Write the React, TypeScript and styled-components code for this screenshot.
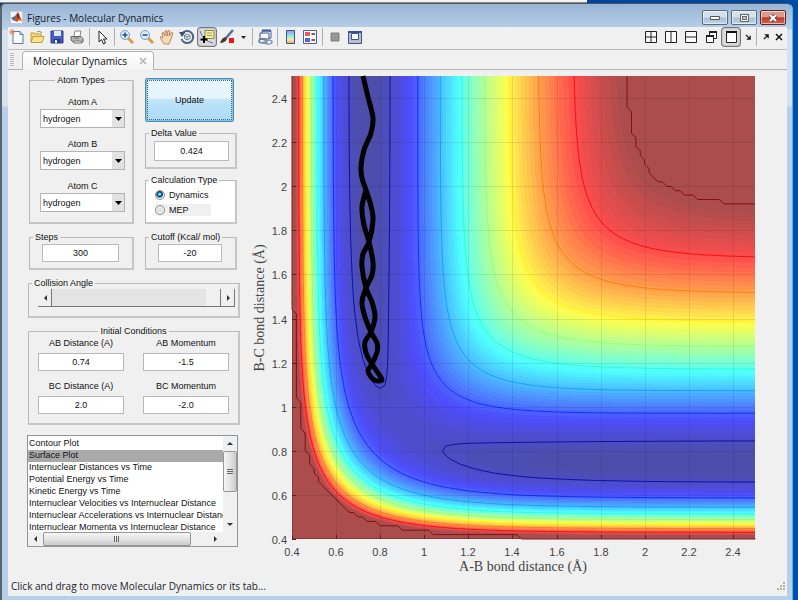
import React, { useState } from "react";
import styled, { createGlobalStyle, css } from "styled-components";

const GlobalStyle = createGlobalStyle`
  *, *::before, *::after { box-sizing: border-box; }
  html, body { margin: 0; padding: 0; }
  body { font-family: "Liberation Sans", Arial, sans-serif; font-size: 9px; line-height: 12px; color: #111; }
  button, input, select { font: inherit; color: inherit; }
`;

/* ---------- window frame ---------- */

const Desktop = styled.div`
  min-height: 100vh;
  display: flex;
  flex-direction: column;
  padding-right: 5px;
  background: linear-gradient(90deg, #003a80, #0049a4);
`;

const BackWindowEdge = styled.div`
  width: 74%;
  height: 3px;
  background: #f4f4f4;
  border-bottom: 1px solid #8d8d88;
`;

const Window = styled.div`
  flex: 1;
  display: flex;
  flex-direction: column;
  padding: 0 5px 4px 6px;
  border: 1px solid #4b5560;
  border-left: 2px solid #5a6570;
  border-right: 1px solid #35c5e8;
  border-bottom: 0;
  border-radius: 5px 6px 0 0;
  background: linear-gradient(180deg, #9ab5d4 0, #b6cfe9 25px, #d5e2f0 26px, #d5e2f0 102px, #b7d0e9 103px);
`;

const TitleBar = styled.header`
  display: flex;
  align-items: center;
  height: 23px;
  padding: 4px 1px 0 2px;
  gap: 4px;
`;

const Title = styled.h1`
  flex: 1;
  margin: 0;
  font: 400 10px/14px "Open Sans", "Noto Sans", sans-serif;
  color: #14202c;
`;

const WindowButtons = styled.div`
  display: flex;
  gap: 3px;
`;

const WindowButton = styled.button<{ $close?: boolean }>`
  width: 26px;
  height: 15px;
  padding: 0;
  display: grid;
  place-items: center;
  border: 1px solid #566a80;
  border-radius: 2px;
  box-shadow: inset 0 0 0 1px rgba(255, 255, 255, 0.55);
  background: linear-gradient(#d3e0ee 0 48%, #a9bfd7 52%, #c1d4e8);
  ${(p) => p.$close && css`
    border-color: #5c2626;
    background: linear-gradient(#dc9a8b 0 45%, #bd3a26 52%, #d2654e);
  `}
`;

const Client = styled.main`
  flex: 1;
  display: flex;
  flex-direction: column;
  background: #f0f0f0;
`;

/* ---------- tool bar ---------- */

const ToolBar = styled.div`
  display: flex;
  align-items: center;
  gap: 2px;
  height: 23px;
  padding: 0 3px 2px 0;
  border-bottom: 1px solid #bdbdbd;
`;

const ToolButton = styled.button<{ $pressed?: boolean; $narrow?: boolean }>`
  width: ${(p) => (p.$narrow ? 11 : 18)}px;
  height: 18px;
  padding: 0;
  display: grid;
  place-items: center;
  border: 0;
  border-radius: 3px;
  background: none;
  ${(p) => p.$pressed && css`
    background: #dcdcdc;
    box-shadow: 0 0 0 1px #777, inset 0 0 2px #999;
  `}
`;

const ToolSeparator = styled.span`
  width: 1px;
  height: 18px;
  margin: 0 1px;
  background: #b0b0b0;
`;

const Spacer = styled.span`
  flex: 1;
`;

/* ---------- tabs ---------- */

const TabStrip = styled.div`
  display: flex;
  align-items: flex-end;
  height: 20px;
  padding-left: 2px;
  border-bottom: 1px solid #b5b5b5;
`;

const Grip = styled.span`
  width: 4px;
  height: 13px;
  margin: 0 8px 3px 0;
  background: repeating-linear-gradient(#b8b8b8 0 1px, #f2f2f2 1px 2px);
`;

const Tab = styled.div`
  display: flex;
  align-items: center;
  gap: 12px;
  height: 19px;
  margin-bottom: -1px;
  padding: 0 6px 0 10px;
  border: 1px solid #b5b5b5;
  border-bottom: 0;
  border-radius: 4px 4px 0 0;
  background: linear-gradient(#fff, #f3f3f3);
`;

const TabLabel = styled.button`
  padding: 0;
  border: 0;
  background: none;
  font-family: "Open Sans", "Noto Sans", sans-serif;
  font-size: 10px;
  line-height: 14px;
`;

const TabClose = styled.button`
  padding: 0;
  border: 0;
  background: none;
  display: grid;
`;

/* ---------- controls ---------- */

const Workspace = styled.div`
  flex: 1;
  display: flex;
  align-items: flex-start;
`;

const Controls = styled.form`
  flex: 0 0 240px;
  display: flex;
  flex-direction: column;
  padding: 4px 8px 0 20px;
`;

const PairGrid = styled.div`
  display: grid;
  grid-template-columns: 105px 1fr;
  column-gap: 11px;
  margin: 0 3px 7px 1px;
`;

const Stack = styled.div`
  display: flex;
  flex-direction: column;
  gap: 5px;
  padding-top: 4px;
`;

const Panel = styled.fieldset<{ $white?: boolean; $gap?: number }>`
  min-width: 0;
  margin: 0 0 ${(p) => p.$gap ?? 0}px;
  padding: 0 6px 6px;
  border: 1px solid #b9b9b9;
  border-right-width: 2px;
  border-bottom-width: 2px;
  border-right-color: #c6c6c6;
  border-bottom-color: #c6c6c6;
  background: ${(p) => (p.$white ? "#fff" : "none")};
`;

const Legend = styled.legend<{ $center?: boolean }>`
  height: 12px;
  padding: 0 2px;
  margin: ${(p) => (p.$center ? "0 auto" : "0 0 0 -3px")};
  white-space: nowrap;
`;

const Field = styled.div`
  display: flex;
  flex-direction: column;
  align-items: center;
  gap: 1px;
  padding: 10px 0 0 3px;
`;

const FieldLabel = styled.label`
  white-space: nowrap;
`;

const SelectBox = styled.div`
  display: grid;
  width: 85px;
  height: 19px;
  & > * { grid-area: 1 / 1; }
`;

const Select = styled.select`
  appearance: none;
  width: 100%;
  padding: 0 16px 0 2px;
  border: 1px solid #b4b4b4;
  border-radius: 0;
  background: linear-gradient(90deg, #fff 0 71px, #e2e2e2 71px);
  outline: 0;
`;

const SelectArrow = styled.svg`
  justify-self: end;
  align-self: center;
  margin-right: 3px;
  pointer-events: none;
`;

const UpdateButton = styled.button`
  height: 44px;
  margin-right: 3px;
  border: 1px solid #4f8db5;
  border-radius: 2px;
  outline: 1px dotted #4a5f70;
  outline-offset: -3px;
  background: linear-gradient(#e6f4fc 0 45%, #bfe4f8 50%, #a9daf5);
  box-shadow: inset 0 0 0 1px #80c4ea;
`;

const NumberBox = styled.input<{ $height?: number }>`
  display: block;
  width: 100%;
  height: ${(p) => p.$height ?? 18}px;
  padding: 0;
  border: 1px solid #b7b9bf;
  border-radius: 0;
  background: #fff;
  text-align: center;
  outline: 0;
`;

const BoxInset = styled.div<{ $top?: number; $wide?: boolean }>`
  padding: ${(p) => p.$top ?? 0}px ${(p) => (p.$wide ? 7 : 0)}px 0 ${(p) => (p.$wide ? 6 : 2)}px;
`;

const RadioRow = styled.label<{ $shaded?: boolean }>`
  display: flex;
  align-items: center;
  gap: 4px;
  width: 56px;
  height: 12px;
  margin: 3px 0 0 3px;
  background: ${(p) => (p.$shaded ? "#f0f0f0" : "none")};
`;

const Radio = styled.input`
  appearance: none;
  width: 10px;
  height: 10px;
  margin: 0;
  border: 1px solid #8b8f94;
  border-radius: 50%;
  background: radial-gradient(circle, #ddd, #f4f4f4);
  &:checked {
    background: radial-gradient(circle at 45% 40%, #7fd6f6 0 1px, #17557d 2px 3px, #f0f4f6 4px);
  }
`;

const SliderRow = styled.div`
  display: grid;
  grid-template-columns: 14px 1fr 14px;
  height: 18px;
  margin: 0 -3px 3px 3px;
  border-bottom: 1px solid #777;
`;

const StepButton = styled.button`
  padding: 0 0 0 2px;
  border: 0;
  border-right: 1px solid #777;
  background: #f0f0f0;
  display: grid;
  place-items: center;
`;

const Slider = styled.input`
  appearance: none;
  width: 100%;
  min-width: 0;
  height: 17px;
  margin: 0;
  background: #e4e4e4;
  &::-webkit-slider-thumb {
    appearance: none;
    width: 15px;
    height: 17px;
    background: #f0f0f0;
    border-right: 1px solid #777;
  }
`;

const ConditionGrid = styled.div`
  display: grid;
  grid-template-columns: 1fr 1fr;
  column-gap: 19px;
  row-gap: 9px;
  padding: 0 3px 3px;
`;

const Condition = styled.div`
  display: flex;
  flex-direction: column;
  align-items: center;
  gap: 4px;
`;

/* ---------- list of plots ---------- */

const ListFrame = styled.div`
  display: grid;
  grid-template-columns: 1fr 14px;
  grid-template-rows: 96px 14px;
  width: 211px;
  margin-left: -1px;
  border: 1px solid #8f959c;
  background: #f0f0f0;
`;

const PlotList = styled.select`
  appearance: none;
  width: 100%;
  height: 96px;
  min-width: 0;
  padding: 2px 0 0;
  border: 0;
  border-radius: 0;
  outline: 0;
  overflow: hidden;
  background: #fff;
  option {
    min-height: 12px;
    height: 12px;
    padding: 0 1px;
    line-height: 12px;
    color: #111;
  }
  option:checked {
    background: #a9a9a9 linear-gradient(#a9a9a9, #a9a9a9);
    color: #111;
  }
`;

const ScrollTrack = styled.div<{ $vertical?: boolean }>`
  display: flex;
  flex-direction: ${(p) => (p.$vertical ? "column" : "row")};
  align-items: stretch;
  background: #f0f0f0;
`;

const ScrollArrow = styled.button`
  flex: 0 0 15px;
  padding: 0;
  border: 0;
  background: none;
  display: grid;
  place-items: center;
`;

const ScrollThumb = styled.div<{ $vertical?: boolean }>`
  flex: 0 0 ${(p) => (p.$vertical ? "41px" : "148px")};
  display: grid;
  place-items: center;
  border: 1px solid #979797;
  border-radius: 2px;
  background: linear-gradient(${(p) => (p.$vertical ? "90deg" : "180deg")}, #f5f5f5, #e4e4e4 50%, #cacaca);
`;

const StatusBar = styled.footer`
  display: flex;
  align-items: center;
  justify-content: space-between;
  height: 19px;
  padding: 0 1px 0 3px;
  font-family: "Open Sans", "Noto Sans", sans-serif;
  font-size: 10px;
  line-height: 15px;
  color: #1b1b2b;
`;

const ChartArea = styled.div`
  flex: 1;
  min-width: 0;
`;

const ChartSvg = styled.svg`
  display: block;
  width: 100%;
  height: auto;
`;

const TickText = styled.text`
  font-family: "Liberation Sans", Arial, sans-serif;
  font-size: 11px;
  fill: #444;
`;

const AxisText = styled.text`
  font-family: "Liberation Serif", "Times New Roman", serif;
  font-size: 14px;
  fill: #444;
`;

/* ---------- potential energy surface (collinear LEPS, H + H2) ---------- */

const WELL = 109.5;
const BETA = 1.942;
const R_EQ = 0.743;
const SATO = 0.187;
const CUTOFF = -22.2;
const LEFT = 292;
const TOP = 76;
const SIZE = 463;
const R_MIN = 0.4;
const R_SPAN = 2.1;

function pair(r: number): [number, number] {
  const u = Math.exp(-BETA * (r - R_EQ));
  const bound = WELL * (u * u - 2 * u);
  const anti = (WELL / 2) * (u * u + 2 * u);
  return [
    ((1 + SATO) * bound + (1 - SATO) * anti) / 2,
    ((1 + SATO) * bound - (1 - SATO) * anti) / 2,
  ];
}

function sampleSurface(n: number, offset: number): number[][] {
  const step = R_SPAN / (offset ? n : n - 1);
  const axis = Array.from({ length: n }, (_, i) => pair(R_MIN + (i + offset) * step));
  const outer = Array.from({ length: 2 * n }, (_, i) => pair(2 * R_MIN + (i + 2 * offset) * step));
  return axis.map(([qy, jy], row) =>
    axis.map(([qx, jx], col) => {
      const [qz, jz] = outer[row + col];
      const j = Math.sqrt(((jx - jy) ** 2 + (jy - jz) ** 2 + (jz - jx) ** 2) / 2);
      return Math.min(CUTOFF, (qx + qy + qz - j) / (1 + SATO));
    })
  );
}

function jet(t: number, alpha: number): string {
  const c = [3, 2, 1].map((k) => {
    const v = Math.max(0, Math.min(1, 1.5 - Math.abs(4 * t - k)));
    return Math.round(255 * (v * alpha + 1 - alpha));
  });
  return `rgb(${c.join(",")})`;
}

const toUnit = (v: number) => (v + WELL) / (CUTOFF + WELL);

function buildBands(): { d: string; fill: string }[] {
  const v = sampleSurface(SIZE, 0.5);
  const bins: string[][] = Array.from({ length: 64 }, () => []);
  v.forEach((line, row) => {
    const y = TOP + SIZE - 1 - row;
    let start = 0;
    const bin = (x: number) => Math.max(0, Math.min(63, Math.floor(toUnit(line[x]) * 64)));
    let current = bin(0);
    for (let x = 1; x <= SIZE; x++) {
      const next = x < SIZE ? bin(x) : -1;
      if (next !== current) {
        bins[current].push(`M${LEFT + start} ${y}h${x - start}v1h${start - x}z`);
        start = x;
        current = next;
      }
    }
  });
  return bins.map((b, i) => ({ d: b.join(""), fill: jet((i + 0.5) / 64, 0.7) }));
}

function buildContour(v: number[][], level: number): string {
  const n = v.length;
  const cell = SIZE / (n - 1);
  const out: string[] = [];
  const px = (x: number, y: number) =>
    `${(LEFT + x * cell).toFixed(1)} ${(TOP + SIZE - y * cell).toFixed(1)}`;
  for (let r = 0; r < n - 1; r++) {
    for (let c = 0; c < n - 1; c++) {
      const corners = [
        [c, r, v[r][c]],
        [c + 1, r, v[r][c + 1]],
        [c + 1, r + 1, v[r + 1][c + 1]],
        [c, r + 1, v[r + 1][c]],
      ];
      const hits: string[] = [];
      for (let k = 0; k < 4; k++) {
        const a = corners[k];
        const b = corners[(k + 1) % 4];
        if (a[2] < level !== b[2] < level) {
          const t = (level - a[2]) / (b[2] - a[2]);
          hits.push(px(a[0] + (b[0] - a[0]) * t, a[1] + (b[1] - a[1]) * t));
        }
      }
      for (let k = 0; k + 1 < hits.length; k += 2) out.push(`M${hits[k]}L${hits[k + 1]}`);
    }
  }
  return out.join("");
}

const BANDS = buildBands();
const GRID = sampleSurface(106, 0);
const CONTOURS = [-105.9, -95.5, -85, -74.6, -64.2, -53.8, -43.3, -32.9, CUTOFF - 0.001].map((level) => ({
  d: buildContour(GRID, level),
  stroke: jet(toUnit(level), 0.95),
}));

const X_TICKS = [0.4, 0.6, 0.8, 1, 1.2, 1.4, 1.6, 1.8, 2, 2.2, 2.4];
const toX = (r: number) => Math.round(LEFT + ((r - R_MIN) / R_SPAN) * SIZE);
const toY = (r: number) => Math.round(TOP + SIZE - ((r - R_MIN) / R_SPAN) * SIZE);

/* the trajectory comes in from the top, turns at the bottom loop and goes back */
const TRAJECTORY: [number, number][] = [
  [363, 76], [368, 97], [373, 118], [371, 133], [364, 150], [361, 167], [362, 178], [366, 190],
  [371, 206], [373, 220], [369, 242], [363, 254], [362, 267], [366, 288], [372, 302], [375, 317],
  [371, 332], [365, 342], [366, 353], [372, 364], [378, 373], [382, 380], [374, 380], [368, 371],
  [372, 364], [377, 352], [377, 343], [371, 332], [365, 317], [362, 302], [366, 288],
  [372, 275], [373, 262], [369, 242], [364, 225], [362, 207], [366, 190],
];

function smoothPath(p: [number, number][]): string {
  let d = `M${p[0][0]} ${p[0][1]}`;
  for (let i = 0; i < p.length - 1; i++) {
    const a = p[Math.max(0, i - 1)];
    const b = p[i];
    const c = p[i + 1];
    const e = p[Math.min(p.length - 1, i + 2)];
    d += `C${b[0] + (c[0] - a[0]) / 6} ${b[1] + (c[1] - a[1]) / 6} ${c[0] - (e[0] - b[0]) / 6} ${c[1] - (e[1] - b[1]) / 6} ${c[0]} ${c[1]}`;
  }
  return d;
}

function EnergyChart() {
  return (
    <ChartSvg viewBox="248 70 539 507" role="img" aria-label="Potential energy surface with trajectory">
      <g shapeRendering="crispEdges">
        {BANDS.map((b, i) => <path key={i} d={b.d} fill={b.fill} />)}
      </g>
      {CONTOURS.map((c, i) => <path key={i} d={c.d} stroke={c.stroke} fill="none" />)}
      <g stroke="#000" strokeOpacity="0.09">
        {X_TICKS.slice(1).map((t) => (
          <path key={t} d={`M${toX(t) + 0.5} ${TOP}v${SIZE}M${LEFT} ${toY(t) + 0.5}h${SIZE}`} />
        ))}
      </g>
      <path d={`M${LEFT + 0.5} ${TOP}v${SIZE - 0.5}h${SIZE}`} fill="none" stroke="#8b3a3a" />
      <g stroke="#5c2020">
        {X_TICKS.map((t) => (
          <path key={t} d={`M${toX(t) + 0.5} ${TOP + SIZE}v-4M${LEFT} ${toY(t) + 0.5}h4`} />
        ))}
      </g>
      <path d={smoothPath(TRAJECTORY)} fill="none" stroke="#000" strokeWidth="5" strokeLinecap="butt" strokeLinejoin="round" />
      {X_TICKS.map((t) => (
        <g key={t}>
          <TickText x={toX(t)} y={556} textAnchor="middle">{t}</TickText>
          <TickText x={287} y={toY(t) + 5} textAnchor="end">{t}</TickText>
        </g>
      ))}
      <AxisText x={523} y={571} textAnchor="middle">A-B bond distance (Å)</AxisText>
      <AxisText transform="translate(264 308) rotate(-90)" textAnchor="middle">B-C bond distance (Å)</AxisText>
    </ChartSvg>
  );
}

/* ---------- icons ---------- */

function Icon({ children, size = 16 }: { children: React.ReactNode; size?: number }) {
  return <svg width={size} height={size} viewBox="0 0 16 16" fill="none" aria-hidden="true">{children}</svg>;
}

const MatlabLogo = () => (
  <svg width="13" height="13" viewBox="0 0 13 13" aria-hidden="true">
    <path d="M0 0h13v13H0z" fill="#f6f6f6" stroke="#9aa" />
    <path d="M1 7l4-2 3-4-1 7-3 2z" fill="#3b74a8" />
    <path d="M4 9l2-3 2-5 2 4 2 5-3-1-2 2z" fill="#d5531e" />
    <path d="M7 4l1-3 1 5-1 3z" fill="#7b1f10" />
  </svg>
);
const NewIcon = () => (
  <Icon>
    <path d="M4 2.500h7l3 3V14.500H4z" fill="#fdfeff" stroke="#5876a6" />
    <path d="M11 2.500v3h3" fill="#cfe0f4" stroke="#5876a6" />
    <path d="M3 0v6M0 3h6M1 1l4 4M5 1L1 5" stroke="#e58a4c" />
  </Icon>
);
const OpenIcon = () => (
  <Icon>
    <path d="M2 13V4h4l1 1h5v3" fill="#f6d878" stroke="#c79c35" />
    <path d="M2 13.500l2-6h11l-2 6z" fill="#fbe48b" stroke="#c79c35" />
    <path d="M8 3q3-2 5 1" stroke="#5b86b7" />
  </Icon>
);
const SaveIcon = () => (
  <Icon>
    <path d="M2 2h12v12H2z" fill="#4a5fc4" stroke="#2b3a86" />
    <path d="M5 2h7v5H5z" fill="#dfe9fa" />
    <path d="M4.500 10h7v4h-7z" fill="#2b3a86" />
    <path d="M6 11h2v3H6z" fill="#e9eefc" />
  </Icon>
);
const PrintIcon = () => (
  <Icon>
    <path d="M5 7L6 2h6l-1 5" fill="#fff" stroke="#888" />
    <path d="M2 7.500h10l2 2v3.500H4l-2-2z" fill="#b9b9b9" stroke="#666" />
    <path d="M4 12l8 0 1 2H5z" fill="#eee" stroke="#777" />
    <path d="M5 9h5" stroke="#666" />
  </Icon>
);
const CursorIcon = () => (
  <Icon><path d="M5 2v11l2.500-2.500 2 4.500 2-1-2-4H13z" fill="#fff" stroke="#222" /></Icon>
);
const ZoomIcon = ({ plus }: { plus?: boolean }) => (
  <Icon>
    <path d="M9 9l5 5" stroke="#dc9a48" strokeWidth="3" />
    <circle cx="6" cy="6" r="4.500" fill="#d9ecfb" stroke="#6fa0d0" />
    <path d={plus ? "M3.500 6h5M6 3.500v5" : "M3.500 6h5"} stroke="#1d4f90" strokeWidth="1.500" />
  </Icon>
);
const HandIcon = () => (
  <Icon>
    <path d="M5 15l-3-5-1-2q1-1 3 1L3 4q1-1 2 0l1 3V2q1-1 2 0v5l1-5q1-1 2 0l-1 5 2-3q1-1 2 0l-2 6-2 5z" fill="#fbd9b4" stroke="#a87550" strokeWidth="0.800" />
  </Icon>
);
const RotateIcon = () => (
  <Icon>
    <path d="M3 5a6 6 0 1 1-.500 5" stroke="#4d6484" strokeWidth="2" />
    <path d="M0 3h6v1L3 8z" fill="#3b5273" />
    <path d="M8 5l3 1.500v3L8 11 5.500 9.500v-3zM5.500 6.500L8 8l3-1.500M8 8v3" fill="#eef4fb" stroke="#4b6488" strokeWidth="0.800" />
  </Icon>
);
const DataCursorIcon = () => (
  <Icon>
    <path d="M6 1.500h9v8H6z" fill="#f5ee9e" stroke="#8d8847" />
    <path d="M8 4h5M8 6.500h5" stroke="#a59f58" />
    <path d="M1 2q3 10 13 12" stroke="#5a60e6" />
    <path d="M5 7v7M1.500 10.500h7" stroke="#000" strokeWidth="2" />
  </Icon>
);
const BrushIcon = () => (
  <Icon>
    <path d="M14 1L7 9" stroke="#53729e" strokeWidth="2.500" />
    <path d="M7 8q-4 0-6 6 5 0 7-4z" fill="#4a3a38" />
    <path d="M10 9h5v5h-5z" fill="#f31414" />
  </Icon>
);
const TinyDown = () => <svg width="5" height="3" aria-hidden="true"><path d="M0 0h5L2.500 3z" fill="#222" /></svg>;
const LinkIcon = () => (
  <Icon>
    <path d="M5 2h9v7H5z" fill="#fff" stroke="#3c5a94" />
    <path d="M3 4h9v6H3z" fill="#f3f7fc" stroke="#3c5a94" />
    <path d="M5 1.500h9" stroke="#3859a8" strokeWidth="2" />
    <ellipse cx="6" cy="12" rx="4" ry="2" stroke="#5f7899" strokeWidth="1.500" />
    <ellipse cx="11" cy="13" rx="4" ry="2" stroke="#8299b4" strokeWidth="1.500" />
  </Icon>
);
const ColorbarIcon = () => (
  <Icon>
    <defs>
      <linearGradient id="bar" x1="0" y1="0" x2="0" y2="1">
        <stop offset="0" stopColor="#8f98ea" /><stop offset="0.400" stopColor="#98e6ea" />
        <stop offset="0.700" stopColor="#f3ee9a" /><stop offset="1" stopColor="#f09a74" />
      </linearGradient>
    </defs>
    <path d="M4.500 1.500h8v13h-8z" fill="url(#bar)" stroke="#3c5490" />
  </Icon>
);
const LegendIcon = () => (
  <Icon>
    <path d="M1.500 1.500h13v13h-13z" fill="#fdfdff" stroke="#4b629a" />
    <path d="M3 3h5v4H3z" fill="#e85858" /><path d="M3 9h5v4H3z" fill="#5b5bea" />
    <path d="M9.500 5H13M9.500 11H13" stroke="#333" strokeWidth="1.500" />
  </Icon>
);
const HideToolsIcon = () => <Icon><path d="M4 4h8v8H4z" fill="#979797" stroke="#7e7e7e" /></Icon>;
const ShowToolsIcon = () => (
  <Icon>
    <path d="M1.500 2.500h13v12h-13z" fill="#b9bfc9" stroke="#3c5490" />
    <path d="M1 3h14" stroke="#34519c" strokeWidth="2" />
    <path d="M4.500 4.500h7v6h-7z" fill="#fff" stroke="#3c5490" />
  </Icon>
);
const TileIcon = ({ split }: { split: string }) => (
  <Icon><path d={`M2.500 2.500h11v11h-11z${split}`} fill="#fafafa" stroke="#222" /></Icon>
);
const CascadeIcon = () => (
  <Icon>
    <path d="M6.500 3.500h7v6h-7z" fill="#fff" stroke="#222" /><path d="M6 3h8" stroke="#222" strokeWidth="2" />
    <path d="M3.500 7.500h7v6h-7z" fill="#fff" stroke="#222" /><path d="M3 7h8" stroke="#222" strokeWidth="2" />
  </Icon>
);
const MaximizeIcon = () => (
  <Icon><path d="M3.500 3.500h10v10h-10z" fill="#fff" stroke="#222" /><path d="M3 3h11" stroke="#111" strokeWidth="2" /></Icon>
);
const DockIcon = ({ up }: { up?: boolean }) => (
  <svg width="6" height="6" viewBox="0 0 7 7" aria-hidden="true">
    <path d={up ? "M2 1h4v4M6 1L1 6" : "M1 1l5 5M6 2v4H2"} fill="none" stroke="#111" strokeWidth="1.500" />
  </svg>
);
const Cross = ({ color = "#111" }: { color?: string }) => (
  <svg width="8" height="8" viewBox="0 0 8 8" aria-hidden="true">
    <path d="M1 1l6 6M7 1L1 7" stroke={color} strokeWidth="1.500" />
  </svg>
);

const ARROWS = {
  up: "M0 4L3 1l3 3z",
  down: "M0 1h6L3 4z",
  left: "M4 0v6L1 3z",
  right: "M1 0v6l3-3z",
};
const Arrow = ({ to }: { to: keyof typeof ARROWS }) => (
  <svg width="6" height="6" viewBox="0 0 6 6" aria-hidden="true"><path d={ARROWS[to]} fill="#333" /></svg>
);

/* ---------- page ---------- */

const PLOTS = [
  "Contour Plot",
  "Surface Plot",
  "Internuclear Distances vs Time",
  "Potential Energy vs Time",
  "Kinetic Energy vs Time",
  "Internuclear Velocities vs Internuclear Distance",
  "Internuclear Accelerations vs Internuclear Distance",
  "Internuclear Momenta vs Internuclear Distance",
];

const CONDITIONS = [
  ["AB Distance (A)", "0.74"],
  ["AB Momentum", "-1.5"],
  ["BC Distance (A)", "2.0"],
  ["BC Momentum", "-2.0"],
];

const TOOL_GROUPS: [string, React.ReactNode][][] = [
  [["New Figure", <NewIcon />], ["Open File", <OpenIcon />], ["Save Figure", <SaveIcon />], ["Print Figure", <PrintIcon />]],
  [["Edit Plot", <CursorIcon />]],
  [["Zoom In", <ZoomIcon plus />], ["Zoom Out", <ZoomIcon />], ["Pan", <HandIcon />], ["Rotate 3D", <RotateIcon />],
    ["Data Cursor", <DataCursorIcon />], ["Brush", <BrushIcon />], ["Brush options", <TinyDown />]],
  [["Link Plot", <LinkIcon />]],
  [["Insert Colorbar", <ColorbarIcon />], ["Insert Legend", <LegendIcon />]],
  [["Hide Plot Tools", <HideToolsIcon />], ["Show Plot Tools", <ShowToolsIcon />]],
];

export default function App() {
  const [mode, setMode] = useState("Dynamics");
  const [plot, setPlot] = useState("Surface Plot");

  return (
    <>
      <GlobalStyle />
      <Desktop>
        <BackWindowEdge />
        <Window>
          <TitleBar>
            <MatlabLogo />
            <Title>Figures - Molecular Dynamics</Title>
            <WindowButtons>
              <WindowButton aria-label="Minimize">
                <svg width="10" height="4"><path d="M.5.5h9v3h-9z" fill="#fff" stroke="#555" /></svg>
              </WindowButton>
              <WindowButton aria-label="Maximize">
                <svg width="9" height="8"><path d="M1.500 1.500h6v5h-6z" fill="none" stroke="#666" strokeWidth="3" /><path d="M1.500 1.500h6v5h-6z" fill="none" stroke="#fff" /></svg>
              </WindowButton>
              <WindowButton aria-label="Close" $close>
                <svg width="10" height="8" viewBox="0 0 10 8"><path d="M2 1l6 6M8 1L2 7" stroke="#544" strokeWidth="3.500" /><path d="M2 1l6 6M8 1L2 7" stroke="#fff" strokeWidth="2" /></svg>
              </WindowButton>
            </WindowButtons>
          </TitleBar>
          <Client>
            <ToolBar role="toolbar" aria-label="Figure tools">
              {TOOL_GROUPS.map((group, i) => (
                <React.Fragment key={i}>
                  {i > 0 && <ToolSeparator />}
                  {group.map(([name, icon]) => (
                    <ToolButton key={name} aria-label={name} $pressed={name === "Data Cursor"} $narrow={name === "Brush options"}>
                      {icon}
                    </ToolButton>
                  ))}
                </React.Fragment>
              ))}
              <Spacer />
              <ToolButton aria-label="Tile"><TileIcon split="M8 2v12M2 8h12" /></ToolButton>
              <ToolButton aria-label="Left and right"><TileIcon split="M8 2v12" /></ToolButton>
              <ToolButton aria-label="Top and bottom"><TileIcon split="M2 8h12" /></ToolButton>
              <ToolButton aria-label="Float"><CascadeIcon /></ToolButton>
              <ToolButton aria-label="Maximize figure" $pressed><MaximizeIcon /></ToolButton>
              <ToolButton aria-label="Dock" $narrow><DockIcon /></ToolButton>
              <ToolSeparator />
              <ToolButton aria-label="Undock" $narrow><DockIcon up /></ToolButton>
              <ToolButton aria-label="Close figure" $narrow><Cross /></ToolButton>
            </ToolBar>
            <TabStrip>
              <Grip />
              <Tab>
                <TabLabel>Molecular Dynamics</TabLabel>
                <TabClose aria-label="Close tab"><Cross color="#b3b3b3" /></TabClose>
              </Tab>
            </TabStrip>
            <Workspace>
              <Controls onSubmit={(e) => e.preventDefault()}>
                <PairGrid>
                  <Panel>
                    <Legend $center>Atom Types</Legend>
                    {["A", "B", "C"].map((atom) => (
                      <Field key={atom}>
                        <FieldLabel htmlFor={`atom-${atom}`}>Atom {atom}</FieldLabel>
                        <SelectBox>
                          <Select id={`atom-${atom}`} defaultValue="hydrogen">
                            <option>hydrogen</option>
                          </Select>
                          <SelectArrow width="7" height="4" aria-hidden="true"><path d="M0 0h7L3.500 4z" fill="#000" /></SelectArrow>
                        </SelectBox>
                      </Field>
                    ))}
                  </Panel>
                  <Stack>
                    <UpdateButton>Update</UpdateButton>
                    <Panel>
                      <Legend>Delta Value</Legend>
                      <BoxInset $top={2}><NumberBox aria-label="Delta Value" defaultValue="0.424" $height={20} /></BoxInset>
                    </Panel>
                    <Panel $white>
                      <Legend>Calculation Type</Legend>
                      {["Dynamics", "MEP"].map((name) => (
                        <RadioRow key={name} $shaded={name === "MEP"}>
                          <Radio type="radio" name="mode" checked={mode === name} onChange={() => setMode(name)} />
                          {name}
                        </RadioRow>
                      ))}
                    </Panel>
                  </Stack>
                </PairGrid>
                <PairGrid>
                  <Panel>
                    <Legend>Steps</Legend>
                    <BoxInset $top={1} $wide><NumberBox aria-label="Steps" defaultValue="300" /></BoxInset>
                  </Panel>
                  <Panel>
                    <Legend>Cutoff (Kcal/ mol)</Legend>
                    <BoxInset $top={1} $wide><NumberBox aria-label="Cutoff (Kcal/ mol)" defaultValue="-20" /></BoxInset>
                  </Panel>
                </PairGrid>
                <Panel $gap={7}>
                  <Legend>Collision Angle</Legend>
                  <SliderRow>
                    <StepButton aria-label="Decrease angle"><Arrow to="left" /></StepButton>
                    <Slider type="range" min={0} max={180} defaultValue={180} aria-label="Collision Angle" />
                    <StepButton aria-label="Increase angle"><Arrow to="right" /></StepButton>
                  </SliderRow>
                </Panel>
                <Panel $gap={10}>
                  <Legend $center>Initial Conditions</Legend>
                  <ConditionGrid>
                    {CONDITIONS.map(([name, value]) => (
                      <Condition key={name}>
                        <FieldLabel htmlFor={name}>{name}</FieldLabel>
                        <NumberBox id={name} defaultValue={value} />
                      </Condition>
                    ))}
                  </ConditionGrid>
                </Panel>
                <ListFrame>
                  <PlotList size={8} value={plot} onChange={(e) => setPlot(e.target.value)} aria-label="Plot type">
                    {PLOTS.map((p) => <option key={p}>{p}</option>)}
                  </PlotList>
                  <ScrollTrack $vertical>
                    <ScrollArrow aria-label="Scroll up"><Arrow to="up" /></ScrollArrow>
                    <ScrollThumb $vertical>
                      <svg width="6" height="6" aria-hidden="true"><path d="M0 .5h6M0 2.500h6M0 4.500h6" stroke="#666" /></svg>
                    </ScrollThumb>
                    <Spacer />
                    <ScrollArrow aria-label="Scroll down"><Arrow to="down" /></ScrollArrow>
                  </ScrollTrack>
                  <ScrollTrack>
                    <ScrollArrow aria-label="Scroll left"><Arrow to="left" /></ScrollArrow>
                    <ScrollThumb>
                      <svg width="6" height="6" aria-hidden="true"><path d="M.5 0v6M2.500 0v6M4.500 0v6" stroke="#666" /></svg>
                    </ScrollThumb>
                    <Spacer />
                    <ScrollArrow aria-label="Scroll right"><Arrow to="right" /></ScrollArrow>
                  </ScrollTrack>
                </ListFrame>
              </Controls>
              <ChartArea><EnergyChart /></ChartArea>
            </Workspace>
            <StatusBar>
              <span>Click and drag to move Molecular Dynamics or its tab...</span>
              <svg width="10" height="10" aria-hidden="true">
                <path d="M7 1h2M4 4h2M7 4h2M1 7h2M4 7h2M7 7h2" stroke="#b5b2a2" strokeWidth="2" />
              </svg>
            </StatusBar>
          </Client>
        </Window>
      </Desktop>
    </>
  );
}
